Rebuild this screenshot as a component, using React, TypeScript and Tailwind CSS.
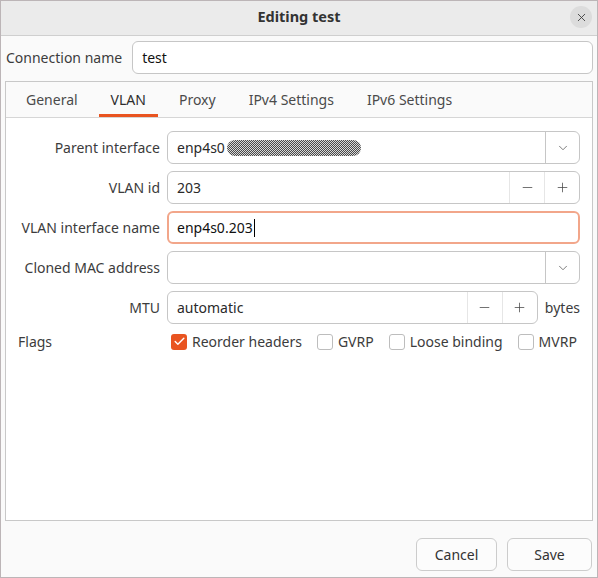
import { Check, ChevronDown, Minus, Plus, X } from "lucide-react";

const tabs = ["General", "VLAN", "Proxy", "IPv4 Settings", "IPv6 Settings"];

function Field({ children, focused }: { children?: React.ReactNode; focused?: boolean }) {
  return (
    <div
      className={
        "flex h-[33px] min-w-0 flex-1 items-center rounded-[6px] bg-white " +
        (focused ? "border-2 border-[#f2a68a] pl-[8px]" : "border border-[#c6c6c6] pl-[9px]")
      }
    >
      {children}
    </div>
  );
}

function Combo({ children }: { children?: React.ReactNode }) {
  return (
    <div className="flex h-[33px] flex-1 items-stretch rounded-[6px] border border-[#c6c6c6] bg-white">
      <div className="flex flex-1 items-center pl-[9px] text-[#2a2a2a]">{children}</div>
      <div className="grid w-[34px] place-items-center border-l border-[#c6c6c6] text-[#555]">
        <ChevronDown className="size-[14px]" strokeWidth={1.3} />
      </div>
    </div>
  );
}

function Spin({ value }: { value: string }) {
  return (
    <div className="flex h-[33px] flex-1 items-stretch rounded-[6px] border border-[#c6c6c6] bg-white">
      <div className="flex flex-1 items-center pl-[9px] text-[#2a2a2a]">{value}</div>
      <div className="grid w-[35px] place-items-center border-l border-[#e6e6e6] text-[#444]">
        <Minus className="size-[15px]" strokeWidth={1.2} />
      </div>
      <div className="grid w-[35px] place-items-center border-l border-[#e6e6e6] text-[#444]">
        <Plus className="size-[15px]" strokeWidth={1.2} />
      </div>
    </div>
  );
}

function Row({ label, children }: { label: string; children: React.ReactNode }) {
  return (
    <div className="flex items-center gap-[7px]">
      <span className="w-[142px] shrink-0 whitespace-nowrap text-right text-[#3c3c3c]">{label}</span>
      {children}
    </div>
  );
}

function Flag({ label, checked }: { label: string; checked?: boolean }) {
  return (
    <label className="flex items-center gap-[5px] whitespace-nowrap text-[#3c3c3c]">
      <span
        className={
          "grid size-[16px] shrink-0 place-items-center rounded-[3px] " +
          (checked ? "bg-[#e95420] text-white" : "border border-[#bdbdbd] bg-white")
        }
      >
        {checked && <Check className="size-[13px]" strokeWidth={2.6} />}
      </span>
      {label}
    </label>
  );
}

function Blur() {
  return (
    <svg width="134" height="16" className="ml-[2px]">
      <defs>
        <pattern id="dither" width="2" height="2" patternUnits="userSpaceOnUse">
          <rect width="2" height="2" fill="#d8d8d8" />
          <rect width="1" height="1" fill="#4a4a4a" />
          <rect x="1" y="1" width="1" height="1" fill="#4a4a4a" />
        </pattern>
      </defs>
      <rect x="0" y="0" width="134" height="16" rx="8" fill="url(#dither)" />
    </svg>
  );
}

export default function App() {
  return (
    <div className="flex h-[578px] w-[598px] flex-col border border-[#bcb5b7] bg-[#fafafa] font-['Noto_Sans',sans-serif] text-[14px] text-[#2e2e2e]">
      <header className="relative flex h-[35px] shrink-0 items-center justify-center border-b border-[#cfcfcf] bg-[#ebebeb]">
        <strong className="pb-[2px] text-[14.5px] font-bold text-[#333]">Editing test</strong>
        <button className="absolute right-[5px] top-[5px] grid size-[22px] place-items-center rounded-full bg-[#dcdcdc] text-[#3a3a3a]">
          <X className="size-[13px]" strokeWidth={1.6} />
        </button>
      </header>

      <div className="flex flex-1 flex-col px-[4px] pt-[5px]">
        <div className="flex items-center gap-[10px] pl-[1px]">
          <span className="whitespace-nowrap text-[#3c3c3c]">Connection name</span>
          <Field>
            <span className="text-[#111]">test</span>
          </Field>
        </div>

        <div className="mt-[7px] flex flex-1 flex-col border border-[#c8c8c8]">
          <nav className="flex h-[36px] shrink-0 gap-[9px] border-b border-[#d6d6d6] bg-[#fafafa] pl-[8px]">
            {tabs.map((t) => (
              <span
                key={t}
                className={
                  "flex items-center whitespace-nowrap px-[12px] pt-[3px] " +
                  (t === "VLAN"
                    ? "border-b-[3px] border-[#e95420] text-[#2e2e2e]"
                    : "border-b-[3px] border-transparent text-[#4a4a4a]")
                }
              >
                {t}
              </span>
            ))}
          </nav>

          <div className="flex flex-1 flex-col gap-[7px] bg-white pl-[12px] pr-[12px] pt-[13px]">
            <Row label="Parent interface">
              <Combo>
                enp4s0
                <Blur />
              </Combo>
            </Row>
            <Row label="VLAN id">
              <Spin value="203" />
            </Row>
            <Row label="VLAN interface name">
              <Field focused>
                <span className="text-[#111]">enp4s0.203</span>
                <span className="ml-[1px] h-[18px] w-px bg-black" />
              </Field>
            </Row>
            <Row label="Cloned MAC address">
              <Combo />
            </Row>
            <Row label="MTU">
              <Spin value="automatic" />
              <span className="text-[#3c3c3c]">bytes</span>
            </Row>
            <div className="flex items-center">
              <span className="w-[149px] shrink-0 text-[#3c3c3c]">Flags</span>
              <div className="flex items-center gap-[15px] pl-[4px]">
                <Flag label="Reorder headers" checked />
                <Flag label="GVRP" />
                <Flag label="Loose binding" />
                <Flag label="MVRP" />
              </div>
            </div>
          </div>
        </div>

        <footer className="flex shrink-0 justify-end gap-[10px] pb-[6px] pr-[1px] pt-[17px]">
          <button className="h-[33px] w-[81px] rounded-[6px] border border-[#cccccc] bg-[#fcfcfc] text-[#333]">
            Cancel
          </button>
          <button className="h-[33px] w-[85px] rounded-[6px] border border-[#cccccc] bg-[#fcfcfc] text-[#333]">
            Save
          </button>
        </footer>
      </div>
    </div>
  );
}
